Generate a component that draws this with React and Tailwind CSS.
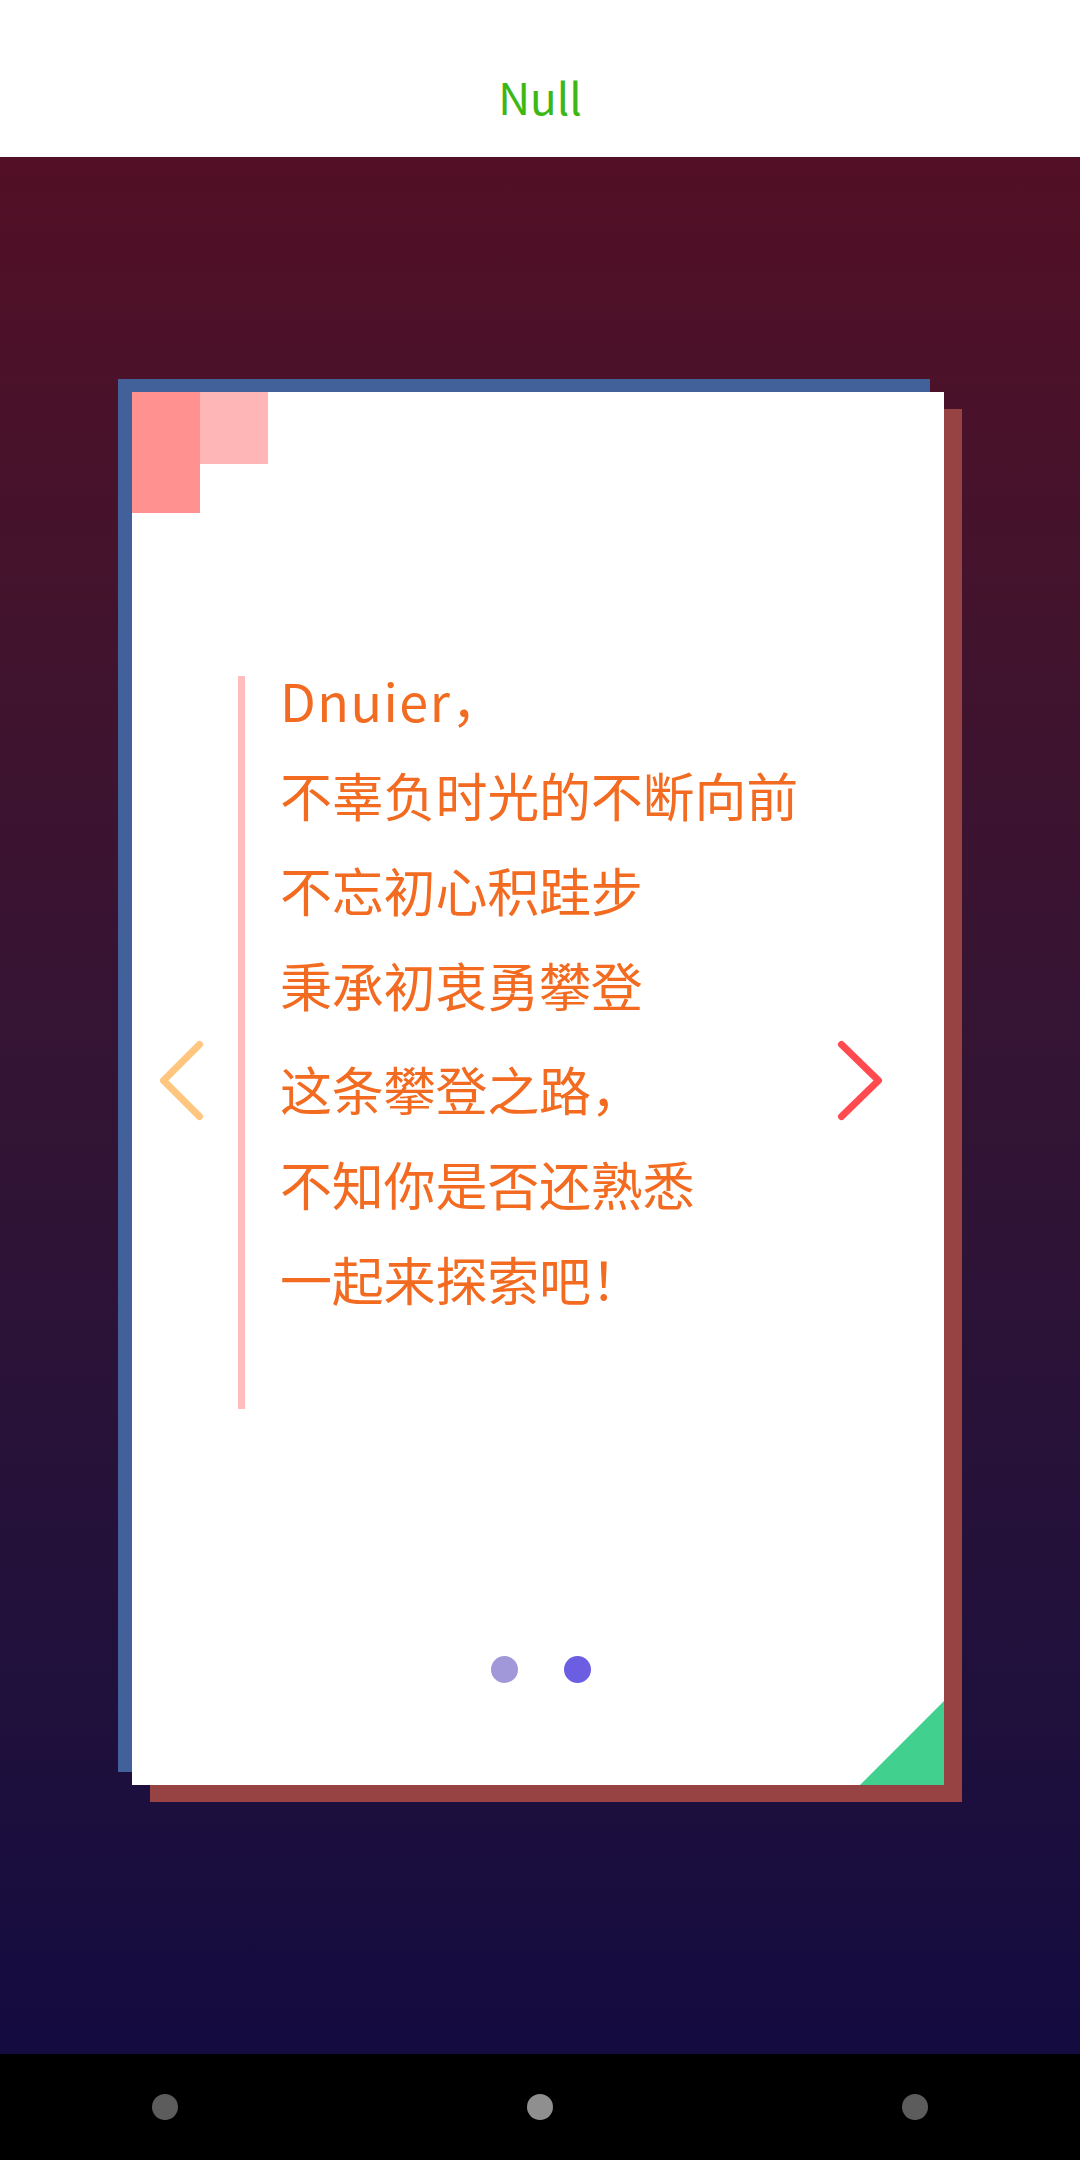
import React from "react";

const font = { fontFamily: '"Noto Sans CJK SC", "Noto Sans", sans-serif' };

const lines1 = ["Dnuier，", "不辜负时光的不断向前", "不忘初心积跬步", "秉承初衷勇攀登"];
const lines2 = ["这条攀登之路，", "不知你是否还熟悉", "一起来探索吧！"];

function ChevronLeft() {
    return (
        <svg width="52" height="88" viewBox="0 0 52 88" className="shrink-0">
            <polyline points="43.5,7.5 7.5,43.5 43.5,79.5" fill="none" stroke="#ffc67f" strokeWidth="7" strokeLinecap="round" strokeLinejoin="round" />
        </svg>
    );
}

function ChevronRight() {
    return (
        <svg width="52" height="88" viewBox="0 0 52 88" className="shrink-0">
            <polyline points="7.5,7.5 44.5,43.5 7.5,79.5" fill="none" stroke="#ff4b50" strokeWidth="7" strokeLinecap="round" strokeLinejoin="round" />
        </svg>
    );
}

export default function App() {
    return (
        <div className="flex flex-col w-[1080px] h-[2160px] overflow-hidden" style={font}>
            {/* Title bar */}
            <div className="h-[157px] shrink-0 bg-white flex justify-center pt-[64px]">
                <div className="text-[44px] leading-[64px] text-[#3cb815]">Null</div>
            </div>

            {/* Main */}
            <div className="flex-1 bg-gradient-to-b from-[#520f25] to-[#140b40] pt-[235px] pl-[132px]">
                <div className="w-[812px] h-[1393px] bg-white flex flex-col shadow-[-14px_-13px_0_0_#42609a,18px_17px_0_0_#974343]">
                    {/* corner blocks */}
                    <div className="flex items-start h-[121px] shrink-0">
                        <div className="w-[68px] h-[121px] bg-[#ff9191]"></div>
                        <div className="w-[68px] h-[72px] bg-[#ffb6b6]"></div>
                    </div>

                    {/* Content */}
                    <div className="flex items-start mt-[139px] pl-[24px] pr-[58px]">
                        <div className="mt-[385px]"><ChevronLeft /></div>
                        <div className="ml-[30px] mt-[24px] w-[7px] h-[733px] bg-[#ffbdbd] shrink-0"></div>
                        <div className="flex-1 pl-[35px] text-[52px] leading-[95px] tracking-[-0.2px] text-[#f26b21]">
                            <div>
                                {lines1.map((l, i) => (
                                    <div key={i} className={i === 0 ? "tracking-[1.5px]" : ""}>{l}</div>
                                ))}
                            </div>
                            <div className="mt-[9px]">
                                {lines2.map((l, i) => (
                                    <div key={i}>{l}</div>
                                ))}
                            </div>
                        </div>
                        <div className="mt-[385px]"><ChevronRight /></div>
                    </div>

                    <div className="mt-auto flex justify-center gap-[46px] pl-[6px]">
                        <div className="w-[27px] h-[27px] rounded-full bg-[#a098d8]"></div>
                        <div className="w-[27px] h-[27px] rounded-full bg-[#6b5ee3]"></div>
                    </div>
                    <div className="mt-[18px] flex justify-end">
                        <svg width="84" height="84" viewBox="0 0 84 84">
                            <polygon points="84,0 84,84 0,84" fill="#41d08e" />
                        </svg>
                    </div>
                </div>
            </div>

            {/* Nav bar */}
            <div className="h-[106px] shrink-0 bg-black flex items-center justify-between px-[152px]">
                <div className="w-[26px] h-[26px] rounded-full bg-[#5c5c5c]"></div>
                <div className="w-[26px] h-[26px] rounded-full bg-[#8f8f8f]"></div>
                <div className="w-[26px] h-[26px] rounded-full bg-[#5c5c5c]"></div>
            </div>
        </div>
    );
}
